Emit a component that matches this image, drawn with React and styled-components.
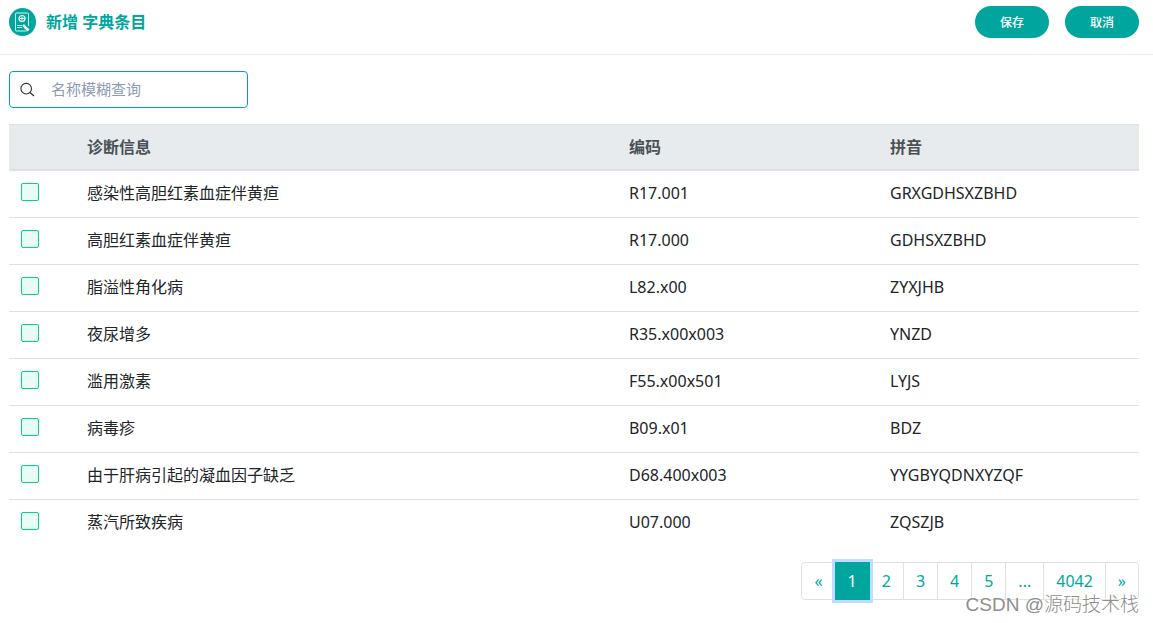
import React, { useState } from "react";
import styled, { createGlobalStyle } from "styled-components";

const GlobalStyle = createGlobalStyle`
  * {
    box-sizing: border-box;
  }
  body {
    margin: 0;
    background: #fff;
    color: #212529;
    font-family: "Noto Sans", "Noto Sans CJK SC", sans-serif;
    font-size: 16px;
    line-height: 24px;
  }
  button,
  input {
    font-family: inherit;
  }
`;

const Page = styled.div`
  position: relative;
  padding-bottom: 23px;
`;

const Header = styled.header`
  display: flex;
  align-items: center;
  justify-content: space-between;
  padding: 6px 14px 16px 9px;
  border-bottom: 1px solid #ebebf3;
`;

const Title = styled.h1`
  display: flex;
  align-items: center;
  gap: 10px;
  margin: 0;
  color: #00a69d;
  font-size: 16px;
  font-weight: 700;
`;

const Actions = styled.div`
  display: flex;
  gap: 16px;
`;

const ActionButton = styled.button`
  width: 74px;
  height: 32px;
  padding: 0;
  border: 0;
  border-radius: 16px;
  background: #00a69d;
  color: #fff;
  font-size: 12px;
  font-weight: 500;
  cursor: pointer;
`;

const Main = styled.main`
  padding: 16px 14px 0 9px;
`;

const SearchBox = styled.label`
  display: flex;
  align-items: center;
  gap: 16px;
  width: 239px;
  height: 37px;
  padding: 0 10px;
  border: 1px solid #00a69d;
  border-radius: 4px;

  svg {
    flex: none;
  }
  input {
    flex: 1;
    min-width: 0;
    padding: 0 0 2px;
    border: 0;
    outline: 0;
    background: transparent;
    color: #212529;
    font-size: 15px;
  }
  input::placeholder {
    color: #8d9ab5;
    opacity: 1;
  }
`;

const Table = styled.table`
  width: 100%;
  margin: 16px 0;
  table-layout: fixed;
  border-collapse: separate;
  border-spacing: 0;

  th {
    padding: 10px 12px;
    border-top: 1px solid #dee2e6;
    border-bottom: 2px solid #dee2e6;
    background: #e7ebee;
    color: #495057;
    font-weight: 700;
    text-align: left;
  }
  td {
    padding: 10px 12px 12px;
    border-bottom: 1px solid #dee2e6;
  }
  tr:last-child td {
    border-bottom: 0;
  }
`;

const Th = styled.th`
  width: ${(props) => props.$width || "auto"};
`;

const Checkbox = styled.input`
  display: block;
  appearance: none;
  width: 18px;
  height: 18px;
  margin: 0 0 2px;
  border: 1px solid #06d092;
  border-radius: 2px;
  background: #e9fbf5;

  &:checked {
    background: #06d092;
  }
`;

const Pagination = styled.nav`
  display: flex;
  justify-content: flex-end;
`;

const PageButton = styled.button`
  position: relative;
  height: 38px;
  margin: 0 0 0 -1px;
  padding: 0 12px;
  border: 1px solid #dee2e6;
  background: #fff;
  color: #00a69d;
  font-size: 16px;
  line-height: 20px;
  cursor: pointer;

  &:first-child {
    border-radius: 4px 0 0 4px;
  }
  &:last-child {
    border-radius: 0 4px 4px 0;
  }
  &[aria-current="page"] {
    z-index: 1;
    border-color: #00a69d;
    background: #00a69d;
    color: #fff;
    box-shadow: 0 0 0 3px #bfdeff;
  }
`;

const Watermark = styled.div`
  position: absolute;
  right: 14px;
  bottom: 4px;
  z-index: 2;
  color: #8e8e8e;
  font-family: "Liberation Sans", "Noto Sans CJK SC", sans-serif;
  font-size: 19px;
  font-weight: 300;
  line-height: 28px;
  text-shadow: 1px 1px 0 #fff;
  white-space: nowrap;
  pointer-events: none;
`;

const rows = [
  { name: "感染性高胆红素血症伴黄疸", code: "R17.001", pinyin: "GRXGDHSXZBHD" },
  { name: "高胆红素血症伴黄疸", code: "R17.000", pinyin: "GDHSXZBHD" },
  { name: "脂溢性角化病", code: "L82.x00", pinyin: "ZYXJHB" },
  { name: "夜尿增多", code: "R35.x00x003", pinyin: "YNZD" },
  { name: "滥用激素", code: "F55.x00x501", pinyin: "LYJS" },
  { name: "病毒疹", code: "B09.x01", pinyin: "BDZ" },
  { name: "由于肝病引起的凝血因子缺乏", code: "D68.400x003", pinyin: "YYGBYQDNXYZQF" },
  { name: "蒸汽所致疾病", code: "U07.000", pinyin: "ZQSZJB" },
];

const pages = ["«", "1", "2", "3", "4", "5", "...", "4042", "»"];

const RecordIcon = () => (
  <svg width="27" height="28" viewBox="0 0 27 28" fill="none" aria-hidden="true">
    <ellipse cx="13.5" cy="14" rx="13.5" ry="14" fill="#00a69d" />
    <path
      d="M19.5 18V6a1 1 0 0 0-1-1h-11a1 1 0 0 0-1 1v16a1 1 0 0 0 1 1h10"
      stroke="#d9f3f1"
    />
    <path d="M8 17.500h5M8 19.500h5" stroke="#b5e5e1" />
    <circle cx="13" cy="10.500" r="3" stroke="#fff" strokeWidth="1.200" />
    <path d="M13 8.500v4M11 10.500h4" stroke="#fff" />
    <path d="M14 17l5.500 5.500" stroke="#fff" strokeWidth="2.500" />
  </svg>
);

const SearchIcon = () => (
  <svg width="15" height="15" viewBox="0 0 15 15" fill="none" stroke="#333" aria-hidden="true">
    <circle cx="6.2" cy="6.700" r="5.300" strokeWidth="1.100" />
    <path d="M10 10.500l4 3.500" strokeWidth="1.200" />
  </svg>
);

const App = () => {
  const [query, setQuery] = useState("");
  const [page, setPage] = useState("1");

  return (
    <Page>
      <GlobalStyle />
      <Header>
        <Title>
          <RecordIcon />
          新增 字典条目
        </Title>
        <Actions>
          <ActionButton type="button">保存</ActionButton>
          <ActionButton type="button">取消</ActionButton>
        </Actions>
      </Header>
      <Main>
        <SearchBox>
          <SearchIcon />
          <input
            type="text"
            aria-label="名称模糊查询"
            placeholder="名称模糊查询"
            value={query}
            onChange={(e) => setQuery(e.target.value)}
          />
        </SearchBox>
        <Table>
          <thead>
            <tr>
              <Th $width="66px" />
              <Th>诊断信息</Th>
              <Th $width="23.1%">编码</Th>
              <Th $width="23.1%">拼音</Th>
            </tr>
          </thead>
          <tbody>
            {rows
              .filter((row) => row.name.includes(query))
              .map((row) => (
                <tr key={row.code}>
                  <td>
                    <Checkbox type="checkbox" aria-label={row.name} />
                  </td>
                  <td>{row.name}</td>
                  <td>{row.code}</td>
                  <td>{row.pinyin}</td>
                </tr>
              ))}
          </tbody>
        </Table>
        <Pagination aria-label="分页">
          {pages.map((label) => (
            <PageButton
              key={label}
              type="button"
              aria-current={label === page ? "page" : undefined}
              onClick={() => Number(label) && setPage(label)}
            >
              {label}
            </PageButton>
          ))}
        </Pagination>
      </Main>
      <Watermark>CSDN @源码技术栈</Watermark>
    </Page>
  );
};

export default App;
